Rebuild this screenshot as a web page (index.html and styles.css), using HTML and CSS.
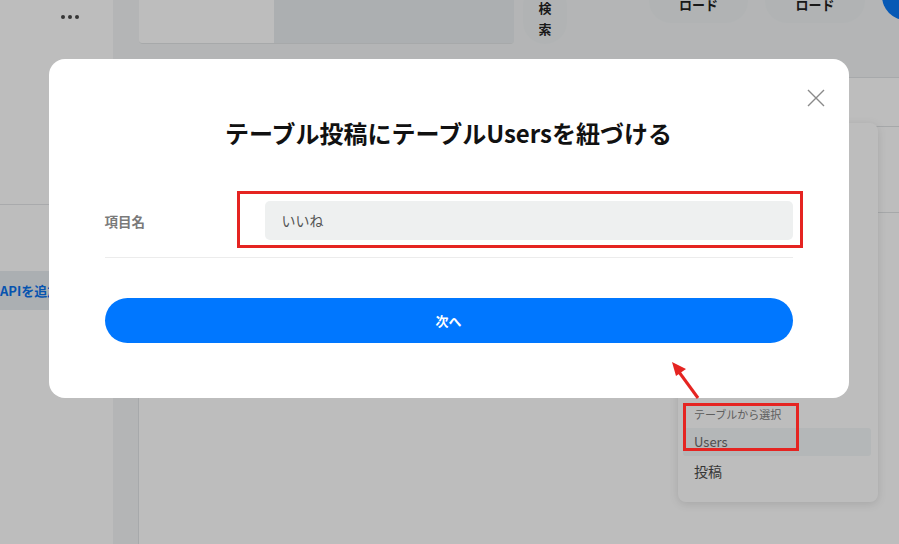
FILE: index.html
```html
<!DOCTYPE html>
<html lang="ja">
<head>
<meta charset="utf-8">
<title>テーブル紐づけ</title>
<link rel="stylesheet" href="styles.css">
</head>
<body>
<div class="app">
  <aside class="sidebar">
    <div class="side-top"><span class="dots"><i></i><i></i><i></i></span></div>
    <div class="side-gap"></div>
    <div class="api-btn">APIを追加</div>
  </aside>
  <div class="right">
    <header class="topbar">
      <div class="card-strip">
        <div class="strip-light"></div>
        <div class="strip-dark"></div>
      </div>
      <div class="pill-v"><span>検</span><span>索</span></div>
      <div class="pill-h">ロード</div>
      <div class="pill-h second">ロード</div>
      <div class="circle"></div>
    </header>
    <div class="content">
      <div class="rail"></div>
      <main class="main">
        <div class="table">
          <div class="thead"></div>
        </div>
      </main>
    </div>
  </div>
</div>

<div class="dropdown">
  <div class="dd-head">テーブルから選択</div>
  <div class="dd-item active">Users</div>
  <div class="dd-item">投稿</div>
</div>

<div class="overlay"></div>

<div class="modal-layer">
  <section class="modal">
    <button class="close" aria-label="閉じる">
      <svg width="18" height="18" viewBox="0 0 18 18"><path d="M1 1 L17 17 M17 1 L1 17" stroke="#8a8a8a" stroke-width="1.4" fill="none"/></svg>
    </button>
    <h1 class="title">テーブル投稿にテーブルUsersを紐づける</h1>
    <div class="row">
      <label class="label">項目名</label>
      <div class="field">
        <div class="input">いいね</div>
        <div class="mark mark-input"></div>
      </div>
    </div>
    <button class="next">次へ</button>
  </section>
</div>

<div class="mark mark-dd"></div>
<svg class="arrow" width="40" height="46" viewBox="0 0 40 46">
  <path d="M30 40 L11 14" stroke="#e52421" stroke-width="3" fill="none"/>
  <path d="M4 4 L18 11 L8 18 Z" fill="#e52421"/>
</svg>
</body>
</html>
```

FILE: styles.css
```css
html, body {
  margin: 0;
  padding: 0;
  width: 899px;
  height: 544px;
  overflow: hidden;
  font-family: "Noto Sans CJK JP", "Noto Sans", sans-serif;
  background: #ffffff;
}

.app {
  display: flex;
  width: 899px;
  height: 544px;
}

.sidebar {
  width: 113px;
  flex: none;
  background: #ffffff;
  display: flex;
  flex-direction: column;
}

.side-top {
  height: 205px;
  border-bottom: 1px solid #e4e6e8;
  display: flex;
  justify-content: flex-start;
  align-items: flex-start;
  padding: 15px 0 0 61px;
  box-sizing: border-box;
}

.dots {
  display: flex;
  gap: 3px;
}
.dots i {
  display: block;
  width: 4px;
  height: 4px;
  border-radius: 50%;
  background: #4a4a4a;
}

.side-gap { height: 66px; }

.api-btn {
  height: 39px;
  background: #e7edf1;
  color: #0a72ec;
  font-size: 13px;
  font-weight: 700;
  line-height: 39px;
  white-space: nowrap;
}

.right {
  flex: 1;
  display: flex;
  flex-direction: column;
  min-width: 0;
}

.topbar {
  height: 78px;
  flex: none;
  background: #f3f5f6;
  border-bottom: 1px solid #e2e5e7;
  box-sizing: border-box;
  display: flex;
  align-items: flex-start;
  padding-left: 26px;
  position: relative;
  overflow: hidden;
}
.topbar > * { flex: none; }

.card-strip {
  display: flex;
  height: 44px;
  width: 375px;
  border-radius: 0 0 4px 4px;
  overflow: hidden;
  border-bottom: 1px solid #e2e4e6;
  box-sizing: border-box;
}
.strip-light { width: 135px; background: #ffffff; }
.strip-dark { flex: 1; background: #e8ecef; }

.pill-v {
  margin-left: 9px;
  width: 44px;
  height: 60px;
  margin-top: -16px;
  border-radius: 22px;
  background: #eff2f3;
  display: flex;
  flex-direction: column;
  align-items: center;
  justify-content: flex-end;
  padding-bottom: 5px;
  box-sizing: border-box;
  font-size: 13px;
  font-weight: 700;
  color: #222;
  line-height: 21px;
}

.pill-h {
  margin-left: 82px;
  width: 99px;
  height: 44px;
  margin-top: -21px;
  border-radius: 22px;
  background: #eff2f3;
  font-size: 13px;
  font-weight: 700;
  color: #222;
  display: flex;
  align-items: flex-end;
  justify-content: center;
  padding-bottom: 9px;
  box-sizing: border-box;
  line-height: 18px;
}
.pill-h.second { margin-left: 17px; width: 100px; }

.circle {
  margin-left: 17px;
  width: 48px;
  height: 48px;
  margin-top: -28px;
  border-radius: 50%;
  background: #0a78f5;
}

.content {
  flex: 1;
  display: flex;
}

.rail {
  width: 25px;
  background: #f3f5f6;
  border-right: 1px solid #e2e5e7;
}

.main {
  flex: 1;
  background: #ffffff;
}

.table {
  margin-top: 48px;
  border-top: 1px solid #e0e3e5;
}
.thead {
  height: 85px;
  border-bottom: 1px solid #e0e3e5;
}

.dropdown {
  position: absolute;
  left: 678px;
  top: 123px;
  width: 200px;
  height: 379px;
  background: #ffffff;
  border-radius: 8px;
  box-shadow: 0 2px 10px rgba(0, 0, 0, 0.12);
  display: flex;
  flex-direction: column;
  justify-content: flex-end;
  padding: 0 7px 17px 5px;
  box-sizing: border-box;
}

.dd-head {
  font-size: 11px;
  color: #808080;
  padding-left: 11px;
  line-height: 20px;
  margin-bottom: 4px;
}

.dd-item {
  font-size: 14px;
  color: #4a4a4a;
  padding-left: 11px;
  height: 28px;
  line-height: 28px;
  border-radius: 3px;
}
.dd-item.active {
  background: #f3f7f8;
  font-size: 13px;
  color: #6a6a6a;
  margin-bottom: 1px;
}

.overlay {
  position: fixed;
  inset: 0;
  background: rgba(0, 0, 0, 0.26);
}

.modal-layer {
  position: fixed;
  inset: 0;
  display: flex;
  justify-content: center;
  align-items: flex-start;
  padding-top: 59px;
  padding-right: 2px;
}

.modal {
  position: relative;
  width: 800px;
  height: 339px;
  background: #ffffff;
  border-radius: 16px;
  padding: 58px 56px 0 56px;
  box-sizing: border-box;
}

.close {
  position: absolute;
  top: 30px;
  right: 24px;
  width: 18px;
  height: 18px;
  padding: 0;
  border: 0;
  background: none;
  display: block;
}
.close svg { display: block; }

.title {
  margin: 0;
  text-align: center;
  font-size: 24px;
  font-weight: 700;
  color: #111;
  line-height: 32px;
}

.row {
  margin-top: 52px;
  display: flex;
  align-items: center;
  padding-bottom: 17px;
  border-bottom: 1px solid #ececec;
}

.label {
  width: 160px;
  flex: none;
  font-size: 13.5px;
  font-weight: 700;
  color: #7a7a7a;
}

.field {
  flex: 1;
  position: relative;
}

.input {
  height: 39px;
  background: #eef0f0;
  border-radius: 5px;
  padding-left: 17px;
  font-size: 14px;
  color: #555;
  line-height: 39px;
}

.mark {
  position: absolute;
  border: 3px solid #e52421;
  box-sizing: border-box;
}

.mark-input {
  left: -28px;
  top: -10px;
  right: -10px;
  bottom: -8px;
}

.next {
  display: block;
  width: 100%;
  margin-top: 40px;
  height: 45px;
  border: 0;
  border-radius: 23px;
  background: #0077ff;
  color: #ffffff;
  font-family: "Noto Sans CJK JP", "Noto Sans", sans-serif;
  font-size: 13px;
  font-weight: 700;
}

.mark-dd {
  left: 683px;
  top: 403px;
  width: 116px;
  height: 48px;
}

.arrow {
  position: absolute;
  left: 668px;
  top: 358px;
}
```
